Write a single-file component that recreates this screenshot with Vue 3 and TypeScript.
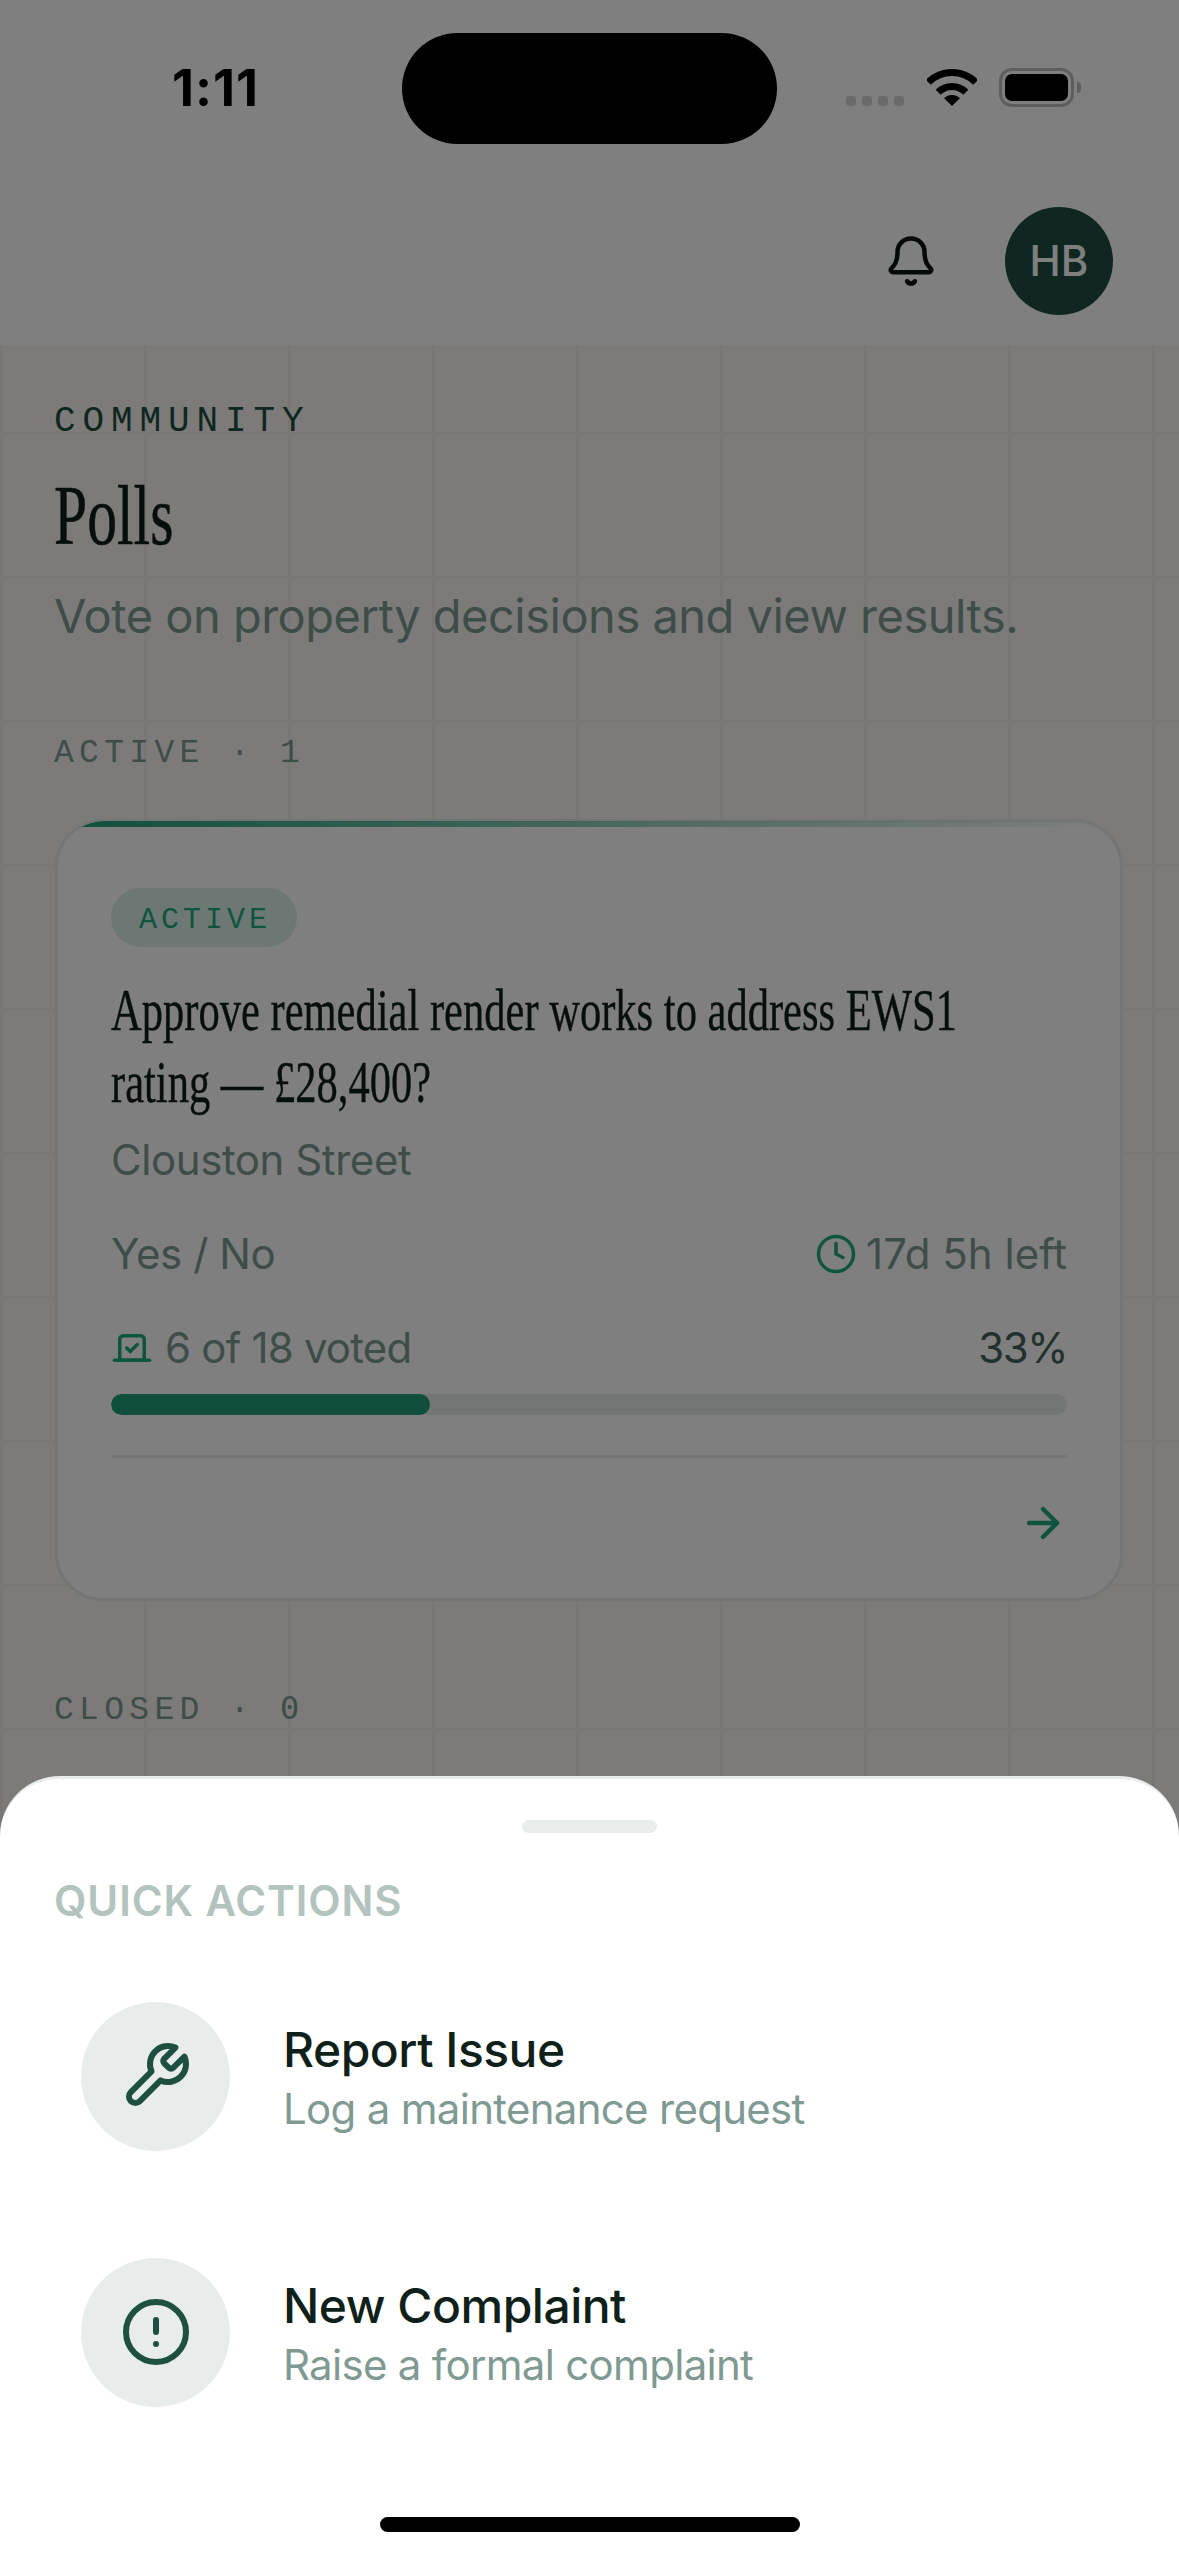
<template>
  <div class="screen">
    <header class="top">
      <div class="status">
        <span class="time">1:11</span>
        <div class="status-icons">
          <div class="dots"><i v-for="n in 4" :key="n"></i></div>
          <svg class="wifi" viewBox="0 0 50 37" width="50" height="37">
            <path d="M1.3 13.3A33.5 33.5 0 0 1 48.7 13.3" fill="none" stroke="#000" stroke-width="7" />
            <path d="M11.2 23.2A19.5 19.5 0 0 1 38.8 23.2" fill="none" stroke="#000" stroke-width="7" />
            <path d="M25 37L17.2 29.2A11 11 0 0 1 32.8 29.2Z" fill="#000" />
          </svg>
          <div class="battery"><div class="battery-fill"></div></div>
          <div class="battery-cap"></div>
        </div>
      </div>
      <div class="island"></div>
      <div class="appbar">
        <svg class="bell" viewBox="0 0 24 24" width="54" height="54" fill="none" stroke="#081410" stroke-width="2" stroke-linecap="round" stroke-linejoin="round">
          <path d="M10.268 21a2 2 0 0 0 3.464 0" />
          <path d="M3.262 15.326A1 1 0 0 0 4 17h16a1 1 0 0 0 .74-1.673C19.41 13.956 18 12.499 18 8A6 6 0 0 0 6 8c0 4.499-1.411 5.956-2.738 7.326" />
        </svg>
        <div class="avatar">HB</div>
      </div>
    </header>

    <main class="content">
      <p class="eyebrow">COMMUNITY</p>
      <h1 class="title">Polls</h1>
      <p class="subtitle">Vote on property decisions and view results.</p>

      <p class="section-label">ACTIVE · 1</p>
      <article class="card">
        <div class="card-strip"></div>
        <span class="badge">ACTIVE</span>
        <h2 class="question">Approve remedial render works to address EWS1 rating — £28,400?</h2>
        <p class="building">Clouston Street</p>
        <div class="meta-row type-row">
          <span class="poll-type">Yes / No</span>
          <span class="with-icon time-left">
            <svg class="clock" viewBox="0 0 24 24" width="42" height="42" fill="none" stroke="currentColor" stroke-width="2" stroke-linecap="round" stroke-linejoin="round">
              <circle cx="12" cy="12" r="10" />
              <polyline points="12 6 12 12 16 14" />
            </svg>
            17d 5h left
          </span>
        </div>
        <div class="meta-row votes-row">
          <span class="with-icon voted">
            <svg class="vote" viewBox="0 0 24 24" width="42" height="42" fill="none" stroke="currentColor" stroke-width="2" stroke-linecap="round" stroke-linejoin="round">
              <path d="m9 12 2 2 4-4" />
              <path d="M5 7c0-1.1.9-2 2-2h10a2 2 0 0 1 2 2v12H5V7Z" />
              <path d="M22 19H2" />
            </svg>
            {{ votes }} of {{ voters }} voted
          </span>
          <span class="percent">{{ Math.round(percent) }}%</span>
        </div>
        <div class="track"><div class="fill" :style="{ width: percent + '%' }"></div></div>
        <div class="card-foot">
          <svg class="arrow" viewBox="0 0 24 24" width="48" height="48" fill="none" stroke="currentColor" stroke-width="2.2" stroke-linecap="round" stroke-linejoin="round">
            <path d="M5 12h14" />
            <path d="m12 5 7 7-7 7" />
          </svg>
        </div>
      </article>

      <p class="section-label closed">CLOSED · <span class="zero">0</span></p>
    </main>

    <div class="scrim"></div>

    <section class="sheet">
      <div class="handle"></div>
      <p class="sheet-title">QUICK ACTIONS</p>
      <div class="actions">
        <div v-for="action in actions" :key="action.title" class="action">
          <div class="action-icon">
            <svg viewBox="0 0 24 24" width="72" height="72" fill="none" stroke="#1e4f40" stroke-width="2" stroke-linecap="round" stroke-linejoin="round">
              <path v-for="d in action.paths" :key="d" :d="d" />
              <circle v-if="action.ring" cx="12" cy="12" r="10" />
            </svg>
          </div>
          <div class="action-text">
            <p class="action-title">{{ action.title }}</p>
            <p class="action-sub">{{ action.sub }}</p>
          </div>
        </div>
      </div>
      <div class="home-bar"></div>
    </section>
  </div>
</template>

<script setup lang="ts">
interface QuickAction {
  title: string
  sub: string
  paths: string[]
  ring?: boolean
}

const votes = 6
const voters = 18
const percent = (votes / voters) * 100

const actions: QuickAction[] = [
  {
    title: 'Report Issue',
    sub: 'Log a maintenance request',
    paths: [
      'M14.7 6.3a1 1 0 0 0 0 1.4l1.6 1.6a1 1 0 0 0 1.4 0l3.77-3.77a6 6 0 0 1-7.94 7.94l-6.91 6.91a2.12 2.12 0 0 1-3-3l6.91-6.91a6 6 0 0 1 7.94-7.94l-3.76 3.76z',
    ],
  },
  {
    title: 'New Complaint',
    sub: 'Raise a formal complaint',
    paths: ['M12 8v4', 'M12 16h.01'],
    ring: true,
  },
]
</script>

<style>
html,
body {
  margin: 0;
  background: #fff;
}
</style>

<style scoped>
.screen {
  position: relative;
  width: 1179px;
  height: 2556px;
  overflow: hidden;
  font-family: Inter, 'Liberation Sans', sans-serif;
  background-color: #f8f6f2;
  background-image:
    linear-gradient(to right, #f1efeb 3px, transparent 3px),
    linear-gradient(to bottom, #f1efeb 3px, transparent 3px);
  background-size: 144px 144px;
}

p,
h1,
h2 {
  margin: 0;
  font-weight: 400;
}

.top {
  position: relative;
  height: 345px;
  background: #fff;
}

.status {
  display: flex;
  justify-content: space-between;
  height: 207px;
  padding: 68px 98px 0 172px;
  box-sizing: border-box;
}

.time {
  font-size: 51px;
  line-height: 39px;
  font-weight: 700;
  color: #000;
  letter-spacing: 1px;
}

.status-icons {
  display: flex;
  align-items: flex-end;
  height: 39px;
}

.dots {
  display: flex;
  gap: 6px;
  margin: 0 23px 1px 0;
}

.dots i {
  width: 10px;
  height: 10px;
  border-radius: 3px;
  background: #d6d6d6;
}

.wifi {
  margin: 0 22px 1px 0;
}

.battery {
  width: 75px;
  height: 39px;
  box-sizing: border-box;
  border: 3px solid #bcbcbc;
  border-radius: 13px;
  padding: 3px;
}

.battery-fill {
  height: 100%;
  border-radius: 7px;
  background: #000;
}

.battery-cap {
  width: 4px;
  height: 11px;
  margin: 0 0 14px 3px;
  border-radius: 0 4px 4px 0;
  background: #bcbcbc;
}

.island {
  position: absolute;
  left: 402px;
  top: 33px;
  width: 375px;
  height: 111px;
  border-radius: 56px;
  background: #000;
}

.appbar {
  display: flex;
  justify-content: flex-end;
  align-items: center;
  gap: 67px;
  padding-right: 66px;
}

.avatar {
  width: 108px;
  height: 108px;
  border-radius: 50%;
  background: #1e4f40;
  color: #fff;
  font-size: 42px;
  font-weight: 500;
  line-height: 108px;
  text-align: center;
}

.content {
  padding: 53px 56px 0 54px;
}

.eyebrow {
  font-family: 'Liberation Mono', monospace;
  font-size: 36px;
  line-height: 48px;
  letter-spacing: 6.9px;
  color: #1e4f40;
}

.title {
  font-family: 'Liberation Serif', serif;
  font-size: 84px;
  line-height: 96px;
  margin-top: 22px;
  color: #0f1f1a;
  -webkit-text-stroke: 0.6px #0f1f1a;
  transform: scaleX(0.71);
  transform-origin: left center;
}

.subtitle {
  font-size: 47px;
  line-height: 66px;
  letter-spacing: -0.5px;
  margin-top: 19px;
  color: #7f9a92;
}

.section-label {
  font-family: 'Liberation Mono', monospace;
  font-size: 33px;
  line-height: 42px;
  letter-spacing: 5.3px;
  color: #7f9a92;
  margin-top: 84px;
}

.zero {
  font-family: 'DejaVu Sans Mono', monospace;
  font-size: 32px;
}

.card {
  position: relative;
  margin: 44px 0 0 1px;
  height: 782px;
  box-sizing: border-box;
  padding: 66px 53px 0;
  background: #fff;
  border: 3px solid #e8ecea;
  border-radius: 48px;
}

.card-strip {
  position: absolute;
  left: 0;
  right: 0;
  top: -1px;
  height: 46px;
  border-radius: 46px 46px 0 0;
  background: linear-gradient(to right, #1e9f78, rgba(30, 159, 120, 0));
  -webkit-mask-image: linear-gradient(#000 6px, transparent 6px);
  mask-image: linear-gradient(#000 6px, transparent 6px);
}

.badge {
  display: inline-block;
  font-family: 'Liberation Mono', monospace;
  font-size: 30px;
  line-height: 53px;
  letter-spacing: 4px;
  padding: 6px 26px 0 28px;
  border-radius: 30px;
  background: #daf0ea;
  color: #1ea87c;
  vertical-align: top;
}

.question {
  width: 1320px;
  margin-top: 27px;
  font-family: 'Liberation Serif', serif;
  font-size: 60px;
  line-height: 72px;
  color: #0f1f1a;
  -webkit-text-stroke: 0.4px #0f1f1a;
  transform: scaleX(0.709);
  transform-origin: left top;
}

.building {
  font-size: 42px;
  line-height: 60px;
  letter-spacing: -0.43px;
  margin-top: 12px;
  color: #7f9a92;
}

.meta-row {
  display: flex;
  justify-content: space-between;
  align-items: center;
  font-size: 42px;
  line-height: 60px;
  color: #7f9a92;
}

.type-row,
.votes-row {
  margin-top: 34px;
}

.poll-type {
  letter-spacing: -0.4px;
}

.voted {
  letter-spacing: -0.8px;
}

.with-icon {
  display: flex;
  align-items: center;
  gap: 12px;
}

.time-left {
  gap: 9px;
}

.clock,
.vote,
.arrow {
  color: #1ea87c;
}

.percent {
  color: #466359;
  letter-spacing: -1.5px;
}

.track {
  height: 21px;
  margin-top: 16px;
  border-radius: 11px;
  background: #e8ecea;
  overflow: hidden;
}

.fill {
  height: 100%;
  border-radius: 11px;
  background: #1e9f78;
}

.card-foot {
  display: flex;
  justify-content: flex-end;
  margin-top: 40px;
  padding-top: 41px;
  border-top: 3px solid #e8ecea;
}

.section-label.closed {
  margin-top: 86px;
}

.scrim {
  position: absolute;
  inset: 0;
  background: rgba(0, 0, 0, 0.5);
}

.sheet {
  position: absolute;
  left: 0;
  right: 0;
  bottom: 0;
  height: 780px;
  box-sizing: border-box;
  padding-top: 41px;
  background: #fff;
  border-top: 3px solid #e8ecea;
  border-radius: 60px 60px 0 0;
}

.handle {
  width: 135px;
  height: 13px;
  margin: 0 auto;
  border-radius: 7px;
  background: #e8ecea;
}

.sheet-title {
  margin: 42px 0 0 54px;
  font-size: 42px;
  line-height: 52px;
  font-weight: 600;
  letter-spacing: 0.9px;
  color: #b3c3be;
}

.actions {
  margin-top: 21px;
}

.action {
  display: flex;
  align-items: center;
  gap: 53px;
  height: 256px;
  padding-left: 81px;
}

.action-icon {
  display: flex;
  align-items: center;
  justify-content: center;
  width: 149px;
  height: 149px;
  border-radius: 50%;
  background: #e8ecea;
}

.action-text {
  padding-top: 3px;
}

.action-title {
  font-size: 48px;
  line-height: 60px;
  font-weight: 500;
  letter-spacing: -0.5px;
  color: #0f1f1a;
}

.action-sub {
  font-size: 42px;
  line-height: 54px;
  margin-top: 2px;
  letter-spacing: -0.7px;
  color: #7f9a92;
}

.home-bar {
  position: absolute;
  left: 380px;
  top: 738px;
  width: 420px;
  height: 15px;
  border-radius: 8px;
  background: #000;
}
</style>
